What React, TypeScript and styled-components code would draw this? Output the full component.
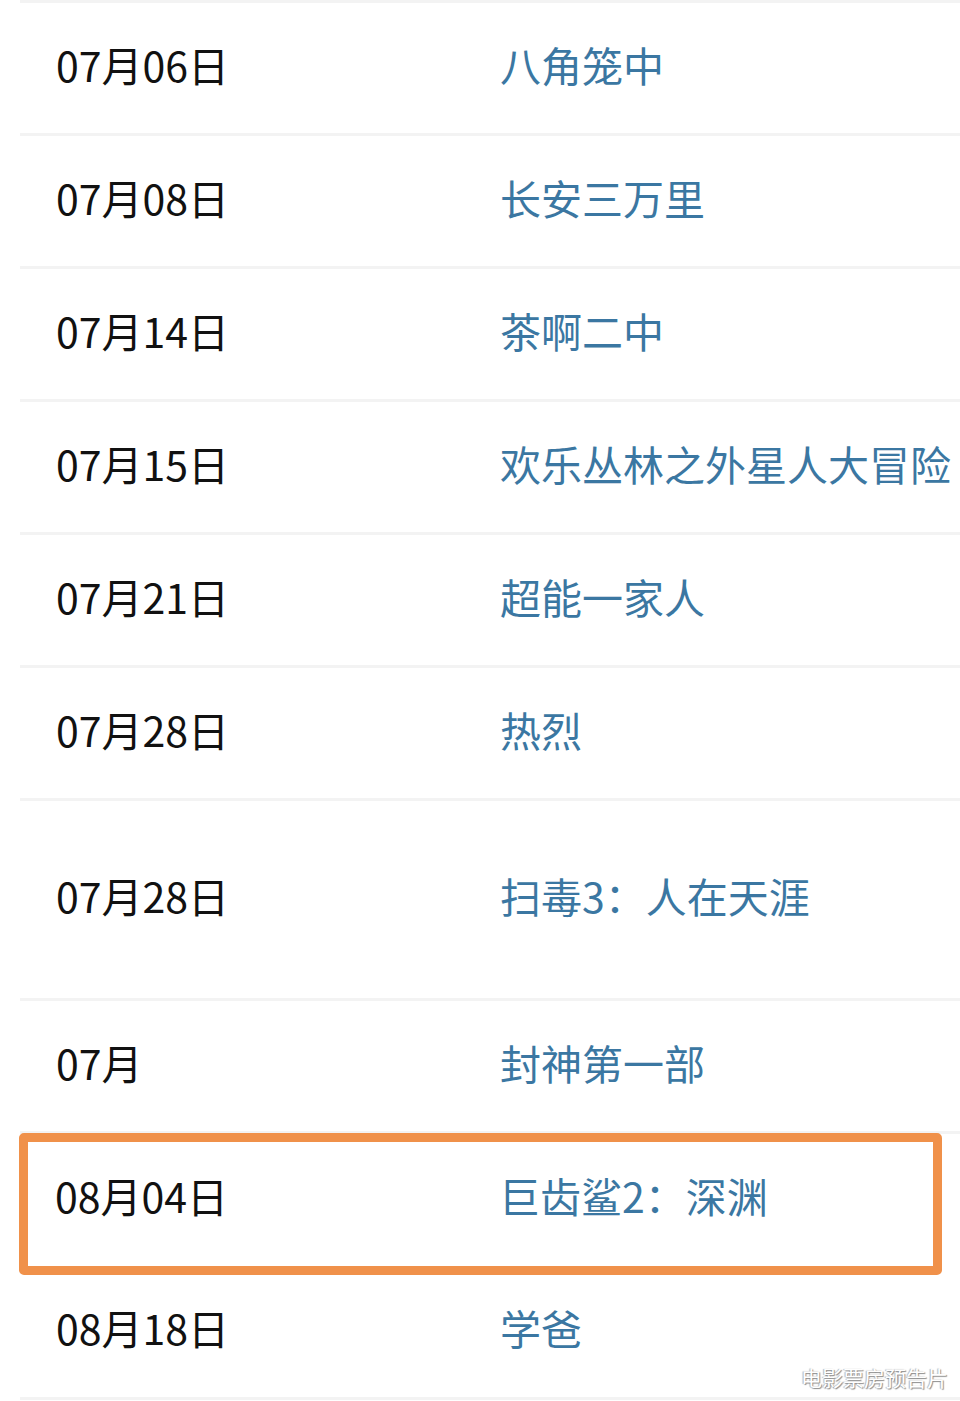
import React from 'react';
import styled, { createGlobalStyle } from 'styled-components';

type Release = {
  date: string;
  title: string;
  height?: number;
  highlight?: boolean;
};

const releases: Release[] = [
  { date: '07月06日', title: '八角笼中' },
  { date: '07月08日', title: '长安三万里' },
  { date: '07月14日', title: '茶啊二中' },
  { date: '07月15日', title: '欢乐丛林之外星人大冒险' },
  { date: '07月21日', title: '超能一家人' },
  { date: '07月28日', title: '热烈' },
  { date: '07月28日', title: '扫毒3：人在天涯', height: 200 },
  { date: '07月', title: '封神第一部' },
  { date: '08月04日', title: '巨齿鲨2：深渊', height: 142, highlight: true },
  { date: '08月18日', title: '学爸', height: 125 },
];

function App() {
  return (
    <>
      <GlobalStyle />
      <Page>
        <List>
          {releases.map((r, i) => (
            <Row key={i} $height={r.height ?? 133} $highlight={r.highlight}>
              <DateCell>{r.date}</DateCell>
              <TitleCell>{r.title}</TitleCell>
            </Row>
          ))}
        </List>
        <Watermark>电影票房预告片</Watermark>
      </Page>
    </>
  );
}

const GlobalStyle = createGlobalStyle`
  body {
    margin: 0;
    background: #fff;
    font-family: 'Noto Sans CJK SC', 'Noto Sans', sans-serif;
  }
`;

const Page = styled.div`
  position: relative;
  width: 960px;
  height: 1401px;
  overflow: hidden;
  background: #fff;
`;

const List = styled.div`
  margin-left: 20px;
  border-top: 3px solid #f3f3f3;
  display: flex;
  flex-direction: column;
`;

const Row = styled.div<{ $height: number; $highlight?: boolean }>`
  box-sizing: border-box;
  height: ${(p) => p.$height}px;
  display: flex;
  align-items: center;
  padding-left: ${(p) => (p.$highlight ? 27 : 36)}px;
  padding-bottom: 8px;
  border-bottom: 3px solid #f3f3f3;
  ${(p) =>
    p.$highlight &&
    `
    margin-top: -1px;
    margin-left: -1px;
    margin-right: 18px;
    border: 9px solid #f0914a;
    border-radius: 5px;
    padding-bottom: 18px;
  `}
  ${(p) => p.$height === 125 && 'padding-bottom: 18px;'}
`;

const DateCell = styled.div`
  width: 444px;
  flex-shrink: 0;
  font-size: 41px;
  line-height: 1;
  color: #111;
`;

const TitleCell = styled.div`
  font-size: 41px;
  line-height: 1;
  color: #3b77a2;
  white-space: nowrap;
`;

const Watermark = styled.div`
  position: absolute;
  right: 12px;
  bottom: 13px;
  font-size: 21px;
  line-height: 1;
  color: #fff;
  text-shadow: 1px 1px 1px #8a8a8a, -1px 0 1px #b0b0b0;
`;

export default App;
